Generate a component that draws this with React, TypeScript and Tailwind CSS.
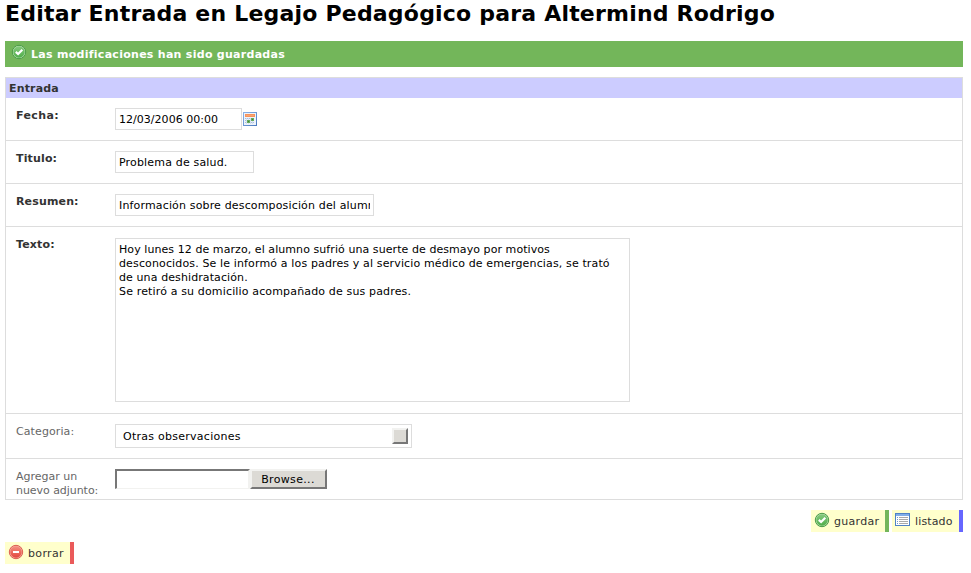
import type { ReactNode } from "react";

function CheckIcon() {
  return (
    <svg width="16" height="16" viewBox="0 0 16 16" className="block shrink-0">
      <defs>
        <linearGradient id="check" x1="0" y1="0" x2="0" y2="1">
          <stop offset="0" stopColor="#86c97d" />
          <stop offset="1" stopColor="#4fae4a" />
        </linearGradient>
      </defs>
      <circle cx="8" cy="8" r="6.7" fill="#b5dcae" stroke="#4a9c46" strokeWidth="1" />
      <circle cx="8" cy="8" r="5.7" fill="url(#check)" />
      <path d="M4.8 7.9 L7.1 10 L11.3 5.7" fill="none" stroke="#fff" strokeWidth="2.2" />
    </svg>
  );
}

function DeleteIcon() {
  return (
    <svg width="16" height="16" viewBox="0 0 16 16" className="block shrink-0">
      <defs>
        <linearGradient id="del" x1="0" y1="0" x2="0" y2="1">
          <stop offset="0" stopColor="#f48f80" />
          <stop offset="1" stopColor="#e2463e" />
        </linearGradient>
      </defs>
      <circle cx="8" cy="8" r="6.7" fill="#f5ab9e" stroke="#dc5f52" strokeWidth="1" />
      <circle cx="8" cy="8" r="5.7" fill="url(#del)" />
      <rect x="5" y="7" width="6" height="2" fill="#fff" />
    </svg>
  );
}

function ListIcon() {
  return (
    <svg width="16" height="16" viewBox="0 0 16 16" className="block shrink-0" shapeRendering="crispEdges">
      <rect x="0.5" y="1.5" width="14" height="12" fill="#fff" stroke="#4f82c6" />
      <rect x="1" y="2" width="13" height="2" fill="#82aee8" />
      {[5, 7, 9, 11].map((y) => (
        <g key={y}>
          <rect x="2" y={y} width="1" height="1" fill="#6f97d2" />
          <rect x="4" y={y} width="9" height="1" fill="#a9a9a9" />
        </g>
      ))}
    </svg>
  );
}

function CalendarIcon() {
  return (
    <svg width="14" height="14" viewBox="0 0 14 14" className="block shrink-0" shapeRendering="crispEdges">
      <defs>
        <linearGradient id="frame" x1="0" y1="0" x2="1" y2="1">
          <stop offset="0" stopColor="#8db4e8" />
          <stop offset="1" stopColor="#4878bd" />
        </linearGradient>
      </defs>
      <rect width="14" height="14" fill="url(#frame)" />
      <rect x="1" y="1" width="12" height="12" fill="#edf3fb" />
      <rect x="2" y="2" width="10" height="3" fill="#f6935c" />
      <rect x="3" y="3" width="8" height="1" fill="#f7a474" />
      {[6, 8, 10].map((y) => [2, 4, 6, 8, 10].map((x) => <rect key={`${x}-${y}`} x={x} y={y} width="1" height="1" fill="#a8bdda" />))}
      <path d="M3.5 6v6M5.5 6v6M7.5 6v6M9.5 6v6" stroke="#d3deee" fill="none" />
      <rect x="8" y="6" width="3" height="3" fill="#66ab5c" />
      <rect x="4" y="8" width="3" height="3" fill="#66ab5c" />
      <rect x="9" y="7" width="1" height="1" fill="#3d8038" />
      <rect x="5" y="9" width="1" height="1" fill="#3d8038" />
    </svg>
  );
}

function Row({ label, strong, height, pad, children }: { label: ReactNode; strong?: boolean; height: string; pad: string; children: ReactNode }) {
  return (
    <div className={`flex items-start border-[#dddddd] pl-[10px] ${height}`}>
      <div className={`w-[99px] shrink-0 pt-[11px] leading-[14px] ${strong ? "font-bold tracking-[0.15px] text-[#333333]" : "text-[#666666]"}`}>{label}</div>
      <div className={`flex items-start ${pad}`}>{children}</div>
    </div>
  );
}

function Action({ icon, label, color, spacing }: { icon: ReactNode; label: string; color: string; spacing: string }) {
  return (
    <a className={`flex h-[22px] items-start border-r-4 bg-[#ffffcc] pt-[2px] pl-[3px] text-[#333333] ${color}`}>
      {icon}
      <span className={`ml-1 pt-[3px] leading-[14px] ${spacing}`}>{label}</span>
    </a>
  );
}

const field = "block border border-[#dddddd] bg-white px-[3px] text-black outline-none";

export default function App() {
  return (
    <main className="h-[573px] w-[971px] overflow-hidden bg-white pr-2 pl-[5px] font-['DejaVu_Sans',sans-serif] text-[11px]">
      <h1 className="h-[41px] text-[22px] leading-[27px] font-bold tracking-[0.2px] whitespace-nowrap text-black">Editar Entrada en Legajo Pedagógico para Altermind Rodrigo</h1>
      <div className="flex h-[26px] items-start bg-[#73b65a] pt-[3px] pl-[6px] font-bold text-white">
        <CheckIcon />
        <span className="ml-1 pt-[4px] leading-[14px] tracking-[0.28px]">Las modificaciones han sido guardadas</span>
      </div>

      <section className="mt-[10px] border border-[#dddddd]">
        <h2 className="h-5 bg-[#ccccff] pt-px pl-[3px] text-[11px] leading-5 font-bold tracking-[0.15px] text-[#333333]">Entrada</h2>
        <Row label={<span className="tracking-[0.4px]">Fecha:</span>} strong height="h-[43px] border-b" pad="pt-[10px]">
          <input className={`${field} h-[22px] w-[127px] tracking-[0.03px]`} defaultValue="12/03/2006 00:00" />
          <span className="mt-1 ml-[1px]"><CalendarIcon /></span>
        </Row>
        <Row label="Titulo:" strong height="h-[43px] border-b" pad="pt-[10px]">
          <input className={`${field} h-[22px] w-[139px] tracking-[0.17px]`} defaultValue="Problema de salud." />
        </Row>
        <Row label="Resumen:" strong height="h-[43px] border-b" pad="pt-[10px]">
          <input className={`${field} h-[22px] w-[259px] tracking-[0.155px]`} defaultValue="Información sobre descomposición del alumno" />
        </Row>
        <Row label="Texto:" strong height="h-[187px] border-b" pad="pt-[11px]">
          <div className={`${field} h-[164px] w-[515px] pt-1 leading-[14px] whitespace-pre`}>
            <p className="tracking-[0.07px]">Hoy lunes 12 de marzo, el alumno sufrió una suerte de desmayo por motivos</p>
            <p className="tracking-[0.137px]">desconocidos. Se le informó a los padres y al servicio médico de emergencias, se trató</p>
            <p className="tracking-[0.1px]">de una deshidratación.</p>
            <p className="tracking-[0.15px]">Se retiró a su domicilio acompañado de sus padres.</p>
          </div>
        </Row>
        <Row label={<span className="tracking-[0.1px]">Categoria:</span>} height="h-[45px] border-b" pad="pt-[10px]">
          <div className="flex h-6 w-[297px] items-center justify-between border border-[#dddddd] pr-[3px] pl-[7px] text-black">
            <span className="pt-[2px] tracking-[0.26px]">Otras observaciones</span>
            <span className="h-4 w-4 border-2 border-t-[#f2f2f0] border-r-[#777777] border-b-[#777777] border-l-[#f2f2f0] bg-[#dcdad5]" />
          </div>
        </Row>
        <Row label={<>Agregar un<br /><span className="tracking-[-0.05px]">nuevo adjunto:</span></>} height="h-[40px]" pad="pt-[10px]">
          <div className="h-5 w-[135px] border-t-2 border-r-2 border-b border-l-2 border-t-[#777777] border-r-[#f2f2f0] border-b-[#f2f2f0] border-l-[#777777]" />
          <button className="h-5 w-[77px] border-2 border-t-[#f2f2f0] border-r-[#777777] border-b-[#777777] border-l-[#f2f2f0] bg-[#dcdad5] pt-px pr-px leading-[16px] tracking-[0.33px] text-black">Browse...</button>
        </Row>
      </section>

      <div className="mt-[10px] flex justify-end gap-[3px]">
        <div className="w-[78px]"><Action icon={<CheckIcon />} label="guardar" color="border-[#73b65a]" spacing="tracking-[0.28px]" /></div>
        <div className="w-[71px]"><Action icon={<ListIcon />} label="listado" color="border-[#6666ff]" spacing="tracking-[0.14px]" /></div>
      </div>
      <div className="mt-[10px] w-[69px]"><Action icon={<DeleteIcon />} label="borrar" color="border-[#ea5a5a]" spacing="tracking-[0.35px]" /></div>
    </main>
  );
}
